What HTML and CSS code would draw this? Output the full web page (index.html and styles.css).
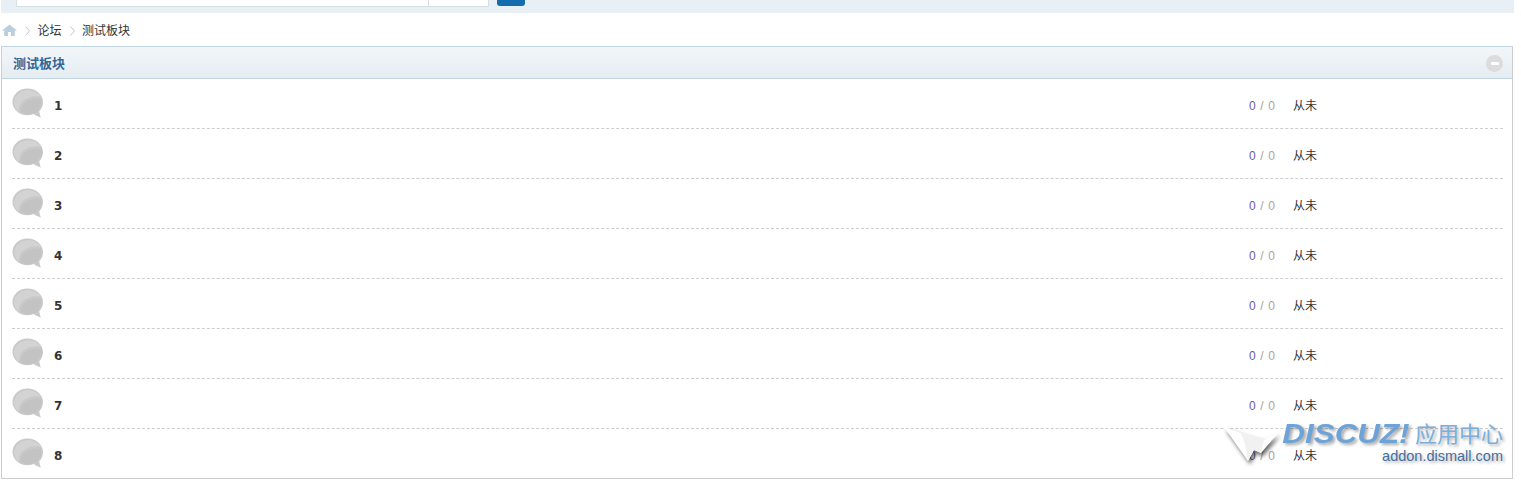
FILE: index.html
```html
<!DOCTYPE html>
<html lang="zh">
<head>
<meta charset="utf-8">
<title>测试板块</title>
<link rel="stylesheet" href="styles.css">
</head>
<body>
<div class="page">
  <div class="topbar">
    <div class="search"><div class="search-input"></div><div class="search-type"></div></div>
    <div class="search-btn"></div>
  </div>
  <nav class="crumbs">
    <svg class="home" width="15" height="12" viewBox="0 0 15 12"><path d="M7.5 0.5 L15 6.5 H12.8 V12 H9 V8 H6 V12 H2.2 V6.5 H0 Z" fill="#b9cfe0"/></svg>
    <svg class="sep" width="5" height="10" viewBox="0 0 5 10"><path d="M0.5 0.5 L4.5 5 L0.5 9.5" fill="none" stroke="#c4c4c4"/></svg>
    <span>论坛</span>
    <svg class="sep" width="5" height="10" viewBox="0 0 5 10"><path d="M0.5 0.5 L4.5 5 L0.5 9.5" fill="none" stroke="#c4c4c4"/></svg>
    <span>测试板块</span>
  </nav>
  <section class="box">
    <header class="box-head">
      <h2>测试板块</h2>
      <span class="collapse"><i></i></span>
    </header>
    <div class="rows">
      <div class="row"><svg class="bubble" viewBox="0 0 32 30"><use href="#b"/></svg><b>1</b><span class="count"><em class="a">0</em> <em class="s">/</em> <em class="c">0</em></span><span class="last">从未</span></div>
      <div class="row"><svg class="bubble" viewBox="0 0 32 30"><use href="#b"/></svg><b>2</b><span class="count"><em class="a">0</em> <em class="s">/</em> <em class="c">0</em></span><span class="last">从未</span></div>
      <div class="row"><svg class="bubble" viewBox="0 0 32 30"><use href="#b"/></svg><b>3</b><span class="count"><em class="a">0</em> <em class="s">/</em> <em class="c">0</em></span><span class="last">从未</span></div>
      <div class="row"><svg class="bubble" viewBox="0 0 32 30"><use href="#b"/></svg><b>4</b><span class="count"><em class="a">0</em> <em class="s">/</em> <em class="c">0</em></span><span class="last">从未</span></div>
      <div class="row"><svg class="bubble" viewBox="0 0 32 30"><use href="#b"/></svg><b>5</b><span class="count"><em class="a">0</em> <em class="s">/</em> <em class="c">0</em></span><span class="last">从未</span></div>
      <div class="row"><svg class="bubble" viewBox="0 0 32 30"><use href="#b"/></svg><b>6</b><span class="count"><em class="a">0</em> <em class="s">/</em> <em class="c">0</em></span><span class="last">从未</span></div>
      <div class="row"><svg class="bubble" viewBox="0 0 32 30"><use href="#b"/></svg><b>7</b><span class="count"><em class="a">0</em> <em class="s">/</em> <em class="c">0</em></span><span class="last">从未</span></div>
      <div class="row"><svg class="bubble" viewBox="0 0 32 30"><use href="#b"/></svg><b>8</b><span class="count"><em class="a">0</em> <em class="s">/</em> <em class="c">0</em></span><span class="last">从未</span></div>
    </div>
  </section>
  <div class="mark">
    <svg class="plane" width="58" height="44" viewBox="0 0 58 44">
      <path d="M0 3 L17 9 L40 16 L54 9 L37 29 L30 26 L24 37 Z" fill="#fff"/>
      <path d="M17 9 L40 16 L37 29 L30 26 L24 37 L21 20 Z" fill="#f1f1f1"/>
    </svg>
    <div class="mark-text">
      <div class="mark-top"><span class="dz">DISCUZ!</span><span class="cn">应用中心</span></div>
      <div class="url">addon.dismall.com</div>
    </div>
  </div>
</div>
<svg class="defs" width="0" height="0">
  <defs>
    <g id="b">
      <path d="M15.5 0.5 C24 0.5 31 6.5 31 14 C31 18 29.5 21 27.3 23.3 C27.5 25.5 28 27.5 29 29.5 C26 28.8 23.5 27.5 21.5 26 C19.5 26.8 17.5 27.2 15.5 27.2 C7 27.2 0.5 21.2 0.5 14 C0.5 6.5 7 0.5 15.5 0.5 Z" fill="#c9c9c9"/>
      <path d="M15.5 2 C8 2.5 2.5 7.5 2 14 C2 18 4 22 7 24 C6 16 12 7 29 8.5 C26 4.5 21 2 15.5 2 Z" fill="#d3d3d3"/>
      <path d="M8.5 24.5 C8 17 14 9.5 29.5 10.5 C30 16 28 21 24 24 C19 26.5 12 26.5 8.5 24.5 Z" fill="#c3c3c3"/>
    </g>
  </defs>
</svg>
</body>
</html>
```
FILE: styles.css
```css
* { box-sizing: border-box; }
html, body { margin: 0; padding: 0; background: #fff; }
body { font: 12px/1.5 "Liberation Sans", "Noto Sans CJK SC", sans-serif; color: #333; overflow: hidden; }
em { font-style: normal; }
.defs { position: absolute; }
.page { position: relative; width: 1514px; height: 482px; padding-left: 1px; }

.topbar { height: 13px; background: #e8eff5; display: flex; align-items: flex-start; padding-left: 15px; }
.search { width: 473px; height: 7px; background: #fff; border: 1px solid #d5dfe6; border-top: 0; display: flex; }
.search-input { width: 412px; border-right: 1px solid #d5dfe6; }
.search-type { flex: 1; }
.search-btn { width: 28px; height: 6px; margin-left: 8px; background: #136cae; border-radius: 0 0 3px 3px; }

.crumbs { height: 33px; display: flex; align-items: center; color: #333; padding: 2px 0 0 1px; }
.home { margin: 0 8px 2px 0; }
.sep { margin: 0 7.5px 0 0; }
.crumbs span { margin-right: 8px; }

.box { width: 1512px; height: 433px; border: 1px solid #cdcdcd; border-top-color: #c2d5e3; }
.box-head { height: 32px; display: flex; align-items: center; justify-content: space-between; padding: 0 9px 0 11px; background: linear-gradient(#f2f6f9, #e5edf2); border-bottom: 1px solid #c2d5e3; }
.box-head h2 { margin: 0; padding-top: 2px; font-size: 13px; font-weight: 700; color: #336699; }
.collapse { width: 17px; height: 17px; margin-top: 2px; border-radius: 50%; background: #dcdcdc; display: flex; align-items: center; justify-content: center; }
.collapse i { width: 8px; height: 3px; background: #fff; border-radius: 1px; }

.rows { padding: 0 9px 0 10px; }
.row { height: 50px; display: flex; align-items: center; border-bottom: 1px dashed #cdcdcd; }
.row:last-child { border-bottom: 0; }
.bubble { width: 32px; height: 30px; flex: none; margin: 0 10px 2px 0; }
.row b { font: 700 12px/18px "DejaVu Sans", sans-serif; color: #333; width: 1195px; flex: none; padding-top: 4px; }
.count { font: 12px/18px "Liberation Sans", sans-serif; word-spacing: 1.3px; width: 44px; flex: none; white-space: nowrap; padding-top: 4px; }
.count .a { color: #6a5c9e; }
.count .s { color: #a9a089; }
.count .c { color: #a9a59a; }
.last { color: #333; padding-top: 4px; }

.mark { position: absolute; right: 11px; top: 421px; display: flex; align-items: flex-start; }
.plane { margin: 3px 0 0 0; filter: drop-shadow(2px 3px 2px rgba(0,0,0,.6)); }
.mark-text { margin-left: 0; text-align: right; }
.mark-top { display: flex; align-items: center; justify-content: flex-end; height: 25px; }
.dz { display: inline-block; font: italic 700 28px/24px "Liberation Sans", sans-serif; color: #6ea3d8; transform: scaleX(1.12); transform-origin: right center; margin-left: 14px; text-shadow: 2px 2px 3px rgba(0,0,0,.35); }
.cn { font: 22px/24px "Noto Sans CJK SC", sans-serif; color: #7aaedd; margin: 0 0 4px 5px; text-shadow: 2px 2px 3px rgba(0,0,0,.3); }
.url { font-size: 14.5px; line-height: 20px; color: #44709e; text-shadow: 2px 2px 3px rgba(0,0,0,.3); }
```
